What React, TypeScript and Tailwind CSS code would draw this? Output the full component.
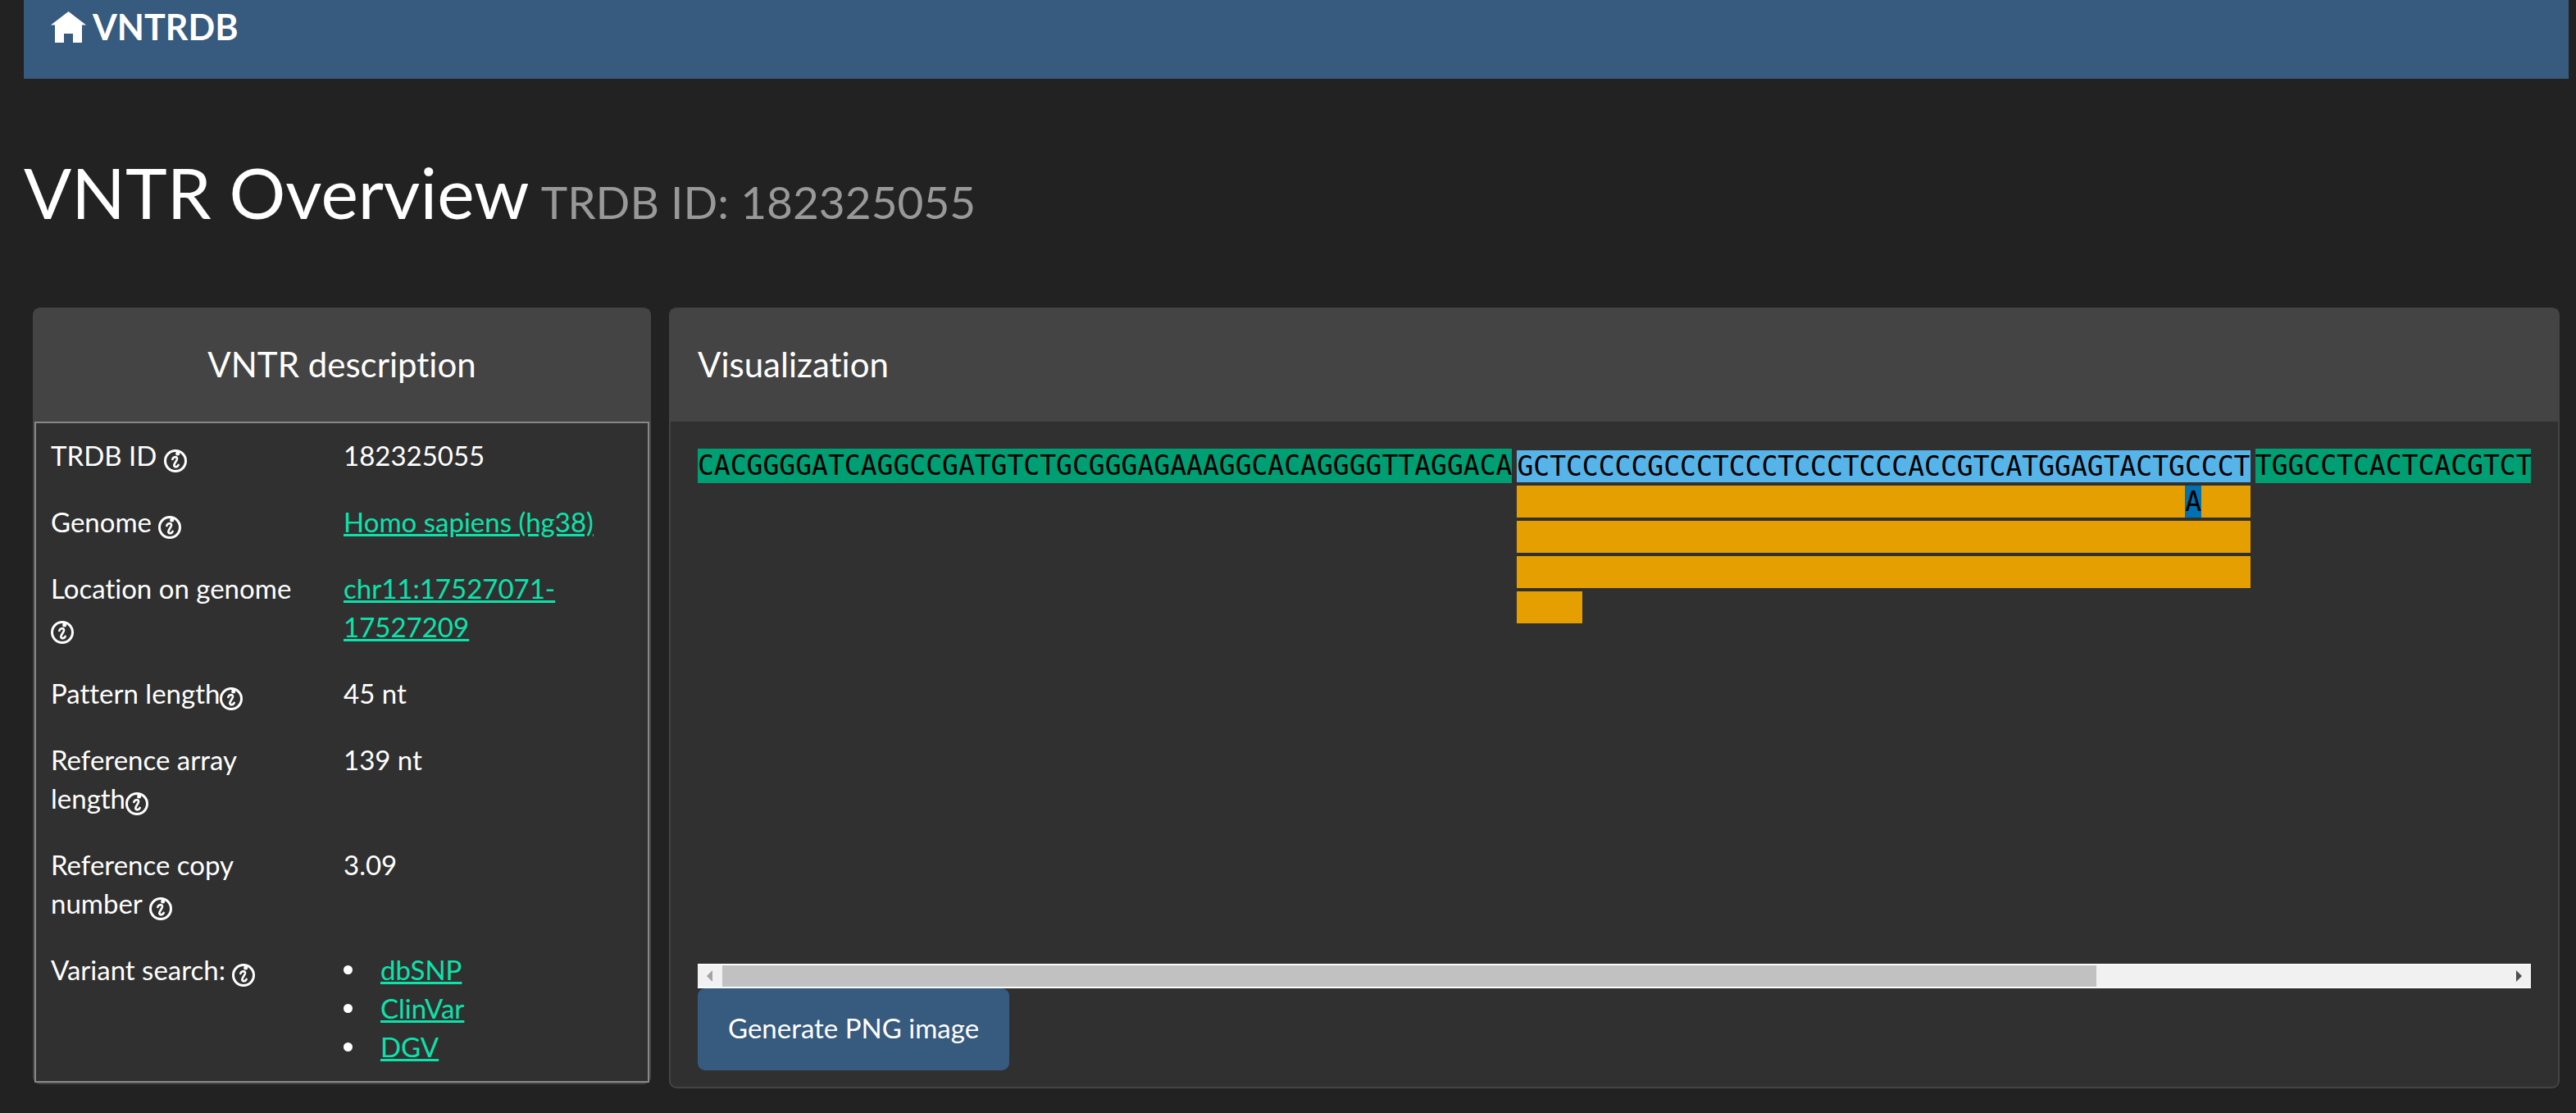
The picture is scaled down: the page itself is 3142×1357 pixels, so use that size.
import type { ReactNode } from "react";

const LEFT_FLANK = "CACGGGGATCAGGCCGATGTCTGCGGGAGAAAGGCACAGGGGTTAGGACA";
const PATTERN = "GCTCCCCCGCCCTCCCTCCCTCCCACCGTCATGGAGTACTGCCCT";
const RIGHT_FLANK = "TGGCCTCACTCACGTCT";

type Copy = { length: number; variants: { index: number; base: string }[] };

const copies: Copy[] = [
  { length: 45, variants: [{ index: 41, base: "A" }] },
  { length: 45, variants: [] },
  { length: 45, variants: [] },
  { length: 4, variants: [] },
];

function HomeIcon() {
  return (
    <svg viewBox="0 0 43 38" className="h-[38px] w-[43px]" fill="#fff" aria-hidden="true">
      <path d="M21.500 0 43 16.500H38V38H27V27H16V38H5V16.500H0Z" />
    </svg>
  );
}

function HelpIcon() {
  return (
    <svg
      viewBox="0 0 84 84"
      className="inline-block h-7 w-7 align-[-8px]"
      fill="none"
      stroke="#fff"
      strokeLinecap="round"
      role="img"
      aria-label="Help"
    >
      <circle cx="42" cy="42" r="37.500" strokeWidth="9" />
      <circle cx="50" cy="15" r="7.500" fill="#fff" stroke="none" />
      <path d="M31 36C34 25 49 25 48 35C47 43 37 50 37 58C38 67 50 64 53 57" strokeWidth="8" />
    </svg>
  );
}

function Link({ children }: { children: ReactNode }) {
  return (
    <a href="#" className="text-[#0ce3ac] underline">
      {children}
    </a>
  );
}

function Row({ label, children }: { label: ReactNode; children: ReactNode }) {
  return (
    <tr>
      <th scope="row" className="w-[358px] px-[18px] pt-4 pb-[18px] text-left align-top font-normal">
        {label}
        <HelpIcon />
      </th>
      <td className="px-[18px] pt-4 pb-[18px] align-top">{children}</td>
    </tr>
  );
}

function RepeatCopy({ copy }: { copy: Copy }) {
  return (
    <div className="w-fit bg-[#e69f00] whitespace-pre">
      {Array.from({ length: copy.length }, (_, i) => {
        const variant = copy.variants.find((v) => v.index === i);
        return variant ? (
          <span key={i} className="bg-[#0072b2]">
            {variant.base}
          </span>
        ) : (
          " "
        );
      })}
    </div>
  );
}

function ScrollBar() {
  return (
    <div className="flex h-[30px] items-stretch border-y-2 border-[#fafafa] bg-[#f1f1f1]">
      <button type="button" aria-label="Scroll left" className="flex w-[30px] items-center pl-[11px]">
        <svg viewBox="0 0 7 14" className="h-[14px] w-[7px]" fill="#a3a3a3">
          <path d="M7 0V14L0 7Z" />
        </svg>
      </button>
      <div className="flex-1">
        <div className="h-full w-[77%] bg-[#c1c1c1]" />
      </div>
      <button type="button" aria-label="Scroll right" className="flex w-[30px] items-center justify-end pr-[11px]">
        <svg viewBox="0 0 7 14" className="h-[14px] w-[7px]" fill="#505050">
          <path d="M0 0V14L7 7Z" />
        </svg>
      </button>
    </div>
  );
}

export default function App() {
  return (
    <div className="min-h-screen bg-[#222] pb-[30px] font-['Lato',sans-serif] text-[33px] leading-[47px] text-white [font-variant-ligatures:none]">
      <nav className="mr-[9px] ml-[29px] h-24 bg-[#375a7f] px-[33px] pt-[9px]">
        <a href="#" className="flex w-fit items-center gap-2 text-[43px] font-bold">
          <HomeIcon />
          VNTRDB
        </a>
      </nav>

      <h1 className="mt-[91px] mb-[94px] ml-[29px] flex items-baseline gap-[14px] text-[86px] leading-[94px]">
        VNTR Overview
        <small className="text-[55px] leading-[60px] text-[#999]">TRDB ID: 182325055</small>
      </h1>

      <main className="mr-5 ml-10 grid grid-cols-[754fr_2306fr] items-start gap-[22px]">
        <section className="rounded-[9px] border-2 border-[#444] bg-[#303030]">
          <h2 className="bg-[#444] pt-11 pb-[46px] text-center text-[42px] leading-[47px]">VNTR description</h2>
          <table className="w-full border-collapse border-2 border-[#888]">
            <tbody>
              <Row label="TRDB ID ">182325055</Row>
              <Row label="Genome ">
                <Link>Homo sapiens (hg38)</Link>
              </Row>
              <Row label="Location on genome ">
                <Link>chr11:17527071-17527209</Link>
              </Row>
              <Row label="Pattern length">45 nt</Row>
              <Row label="Reference array length">139 nt</Row>
              <Row label="Reference copy number ">3.09</Row>
              <Row label="Variant search: ">
                <ul>
                  {["dbSNP", "ClinVar", "DGV"].map((name) => (
                    <li key={name} className="flex items-center gap-[34px]">
                      <span className="size-[11px] rounded-full bg-white" />
                      <Link>{name}</Link>
                    </li>
                  ))}
                </ul>
              </Row>
            </tbody>
          </table>
        </section>

        <section className="min-w-0 rounded-[9px] border-2 border-[#444] bg-[#303030]">
          <h2 className="bg-[#444] px-[33px] pt-11 pb-[46px] text-[42px] leading-[47px]">Visualization</h2>
          <div className="px-[33px] pt-[33px] pb-5">
            <div className="h-[628px] overflow-hidden">
              <div className="flex w-max items-start gap-[6px] font-['DejaVu_Sans_Mono',monospace] leading-[39px] text-black">
                <div className="bg-[#009e73] leading-[42px]">{LEFT_FLANK}</div>
                <div className="flex flex-col gap-1 pt-[2px]">
                  <div className="bg-[#56b4e9]">{PATTERN}</div>
                  {copies.map((copy, i) => (
                    <RepeatCopy key={i} copy={copy} />
                  ))}
                </div>
                <div className="bg-[#009e73] leading-[42px]">{RIGHT_FLANK}</div>
              </div>
            </div>
            <ScrollBar />
            <button type="button" className="block h-[100px] rounded-[9px] bg-[#375a7f] px-[37px] pb-1">
              Generate PNG image
            </button>
          </div>
        </section>
      </main>
    </div>
  );
}
